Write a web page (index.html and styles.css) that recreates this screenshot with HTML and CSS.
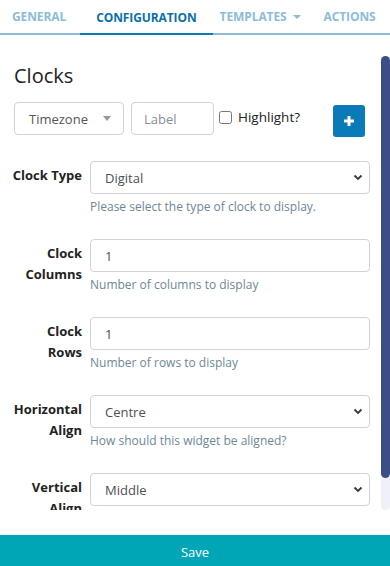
FILE: index.html
```html
<!DOCTYPE html>
<html lang="en">
<head>
  <meta charset="UTF-8" />
  <meta name="viewport" content="width=device-width, initial-scale=1.0" />
  <title>Clock Widget - Configuration</title>
  <link rel="stylesheet" href="styles.css">
</head>
<body>
  <nav class="tabs">
    <a class="tab">General</a>
    <a class="tab active">Configuration</a>
    <a class="tab">Templates <span class="caret"></span></a>
    <a class="tab">Actions</a>
  </nav>

  <main class="panel">
    <div class="panel-body">
      <h2 class="heading">Clocks</h2>

      <div class="clock-add">
        <div class="control tz-select">
          <span>Timezone</span>
          <span class="tz-caret"></span>
        </div>
        <input type="text" class="control label-input" placeholder="Label" />
        <label class="check"><input type="checkbox" /> Highlight?</label>
        <button class="btn-add" title="Add clock">
          <svg width="12" height="12" viewBox="0 0 12 12"><path d="M6 1v10M1 6h10" stroke="#fff" stroke-width="3"/></svg>
        </button>
      </div>

      <div class="form-row">
        <label class="form-label">Clock Type</label>
        <div class="form-field">
          <div class="control select">
            <span>Digital</span>
            <svg class="chevron" width="10" height="7" viewBox="0 0 10 7"><path d="M1.5 1.5l3.5 3.5 3.5-3.5" fill="none" stroke="#343a40" stroke-width="1.8"/></svg>
          </div>
          <small class="help">Please select the type of clock to display.</small>
        </div>
      </div>

      <div class="form-row">
        <label class="form-label">Clock Columns</label>
        <div class="form-field">
          <input type="text" class="control" value="1" />
          <small class="help">Number of columns to display</small>
        </div>
      </div>

      <div class="form-row">
        <label class="form-label">Clock Rows</label>
        <div class="form-field">
          <input type="text" class="control" value="1" />
          <small class="help">Number of rows to display</small>
        </div>
      </div>

      <div class="form-row">
        <label class="form-label">Horizontal Align</label>
        <div class="form-field">
          <div class="control select">
            <span>Centre</span>
            <svg class="chevron" width="10" height="7" viewBox="0 0 10 7"><path d="M1.5 1.5l3.5 3.5 3.5-3.5" fill="none" stroke="#343a40" stroke-width="1.8"/></svg>
          </div>
          <small class="help">How should this widget be aligned?</small>
        </div>
      </div>

      <div class="form-row">
        <label class="form-label">Vertical Align</label>
        <div class="form-field">
          <div class="control select">
            <span>Middle</span>
            <svg class="chevron" width="10" height="7" viewBox="0 0 10 7"><path d="M1.5 1.5l3.5 3.5 3.5-3.5" fill="none" stroke="#343a40" stroke-width="1.8"/></svg>
          </div>
        </div>
      </div>
    </div>

    <div class="scrollbar"><div class="thumb"></div></div>
  </main>

  <footer class="footer">
    <button class="btn-save">Save</button>
  </footer>
</body>
</html>
```

FILE: styles.css
```css
body {
  margin: 0;
  font-family: "Open Sans", Arial, sans-serif;
  font-size: 13px;
  color: #212529;
  background: #fff;
  overflow: hidden;
}
.tabs {
  display: flex;
  height: 33px;
  padding-left: 12px;
  border-bottom: 2px solid #8dbbd9;
  white-space: nowrap;
}
.tab {
  display: flex;
  align-items: center;
  margin-right: 23px;
  font-size: 12px;
  font-weight: 700;
  letter-spacing: -0.1px;
  text-transform: uppercase;
  color: #8dbbd9;
  cursor: pointer;
}
.tab:last-child {
  margin-right: 0;
}
.tab.active {
  height: 31px;
  margin: 0 7px -2px -9px;
  padding: 2px 16px 0;
  border-bottom: 2px solid #0a7bb8;
  color: #0b6fa8;
}
.caret {
  display: inline-block;
  margin-left: 6px;
  border-top: 4px solid #8dbbd9;
  border-left: 4px solid transparent;
  border-right: 4px solid transparent;
}
.panel {
  position: relative;
  height: 475px;
  overflow: hidden;
}
.panel-body {
  padding: 0 20px 0 14px;
}
.heading {
  margin: 0;
  padding-top: 28px;
  font-size: 20px;
  font-weight: 500;
  line-height: 26px;
  color: #222;
}
.clock-add {
  display: flex;
  align-items: flex-start;
  margin-top: 13px;
}
.control {
  box-sizing: border-box;
  height: 33px;
  width: 100%;
  padding: 0 14px;
  border: 1px solid #ced4da;
  border-radius: 4px;
  font-family: inherit;
  font-size: 13px;
  color: #495057;
  background: #fff;
  display: flex;
  align-items: center;
}
.tz-select {
  width: 110px;
  justify-content: space-between;
  color: #555;
}
.tz-caret {
  border-top: 5px solid #999;
  border-left: 4px solid transparent;
  border-right: 4px solid transparent;
  margin-right: -2px;
}
.label-input {
  width: 83px;
  margin-left: 7px;
  padding-left: 12px;
}
.label-input::placeholder {
  color: #868e96;
}
.check {
  display: flex;
  align-items: center;
  margin-top: 6px;
  margin-left: 2px;
  font-size: 13.5px;
  color: #222;
}
.check input {
  margin: 0 6px 0 3px;
  width: 13px;
  height: 13px;
}
.btn-add {
  margin: 3px 5px 0 auto;
  width: 32px;
  height: 32px;
  border: none;
  border-radius: 3px;
  background: #0a7bb8;
  display: flex;
  align-items: center;
  justify-content: center;
  padding: 0;
}
.form-row {
  display: grid;
  grid-template-columns: 68px 1fr;
  column-gap: 8px;
  margin-top: 23px;
}
.clock-add + .form-row {
  margin-top: 24px;
}
.form-label {
  margin-left: -3px;
  padding-top: 4px;
  text-align: right;
  font-weight: 700;
  line-height: 21px;
  color: #222;
}
.form-field {
  display: flex;
  flex-direction: column;
}
.select {
  justify-content: space-between;
}
.chevron {
  margin-right: -8px;
}
.help {
  margin-top: 4px;
  font-size: 12px;
  line-height: 18px;
  color: #6d8797;
}
.scrollbar {
  position: absolute;
  top: 21px;
  right: 0;
  bottom: 0;
  width: 9px;
  border-radius: 5px;
  background: #f0f1f8;
}
.thumb {
  height: 422px;
  border-radius: 5px;
  background: #3b4e86;
}
.footer {
  margin-top: 25px;
}
.btn-save {
  display: block;
  width: 100%;
  height: 31px;
  padding-top: 4px;
  border: none;
  background: #00a5b6;
  color: #fff;
  font-family: inherit;
  font-size: 13px;
}
```
